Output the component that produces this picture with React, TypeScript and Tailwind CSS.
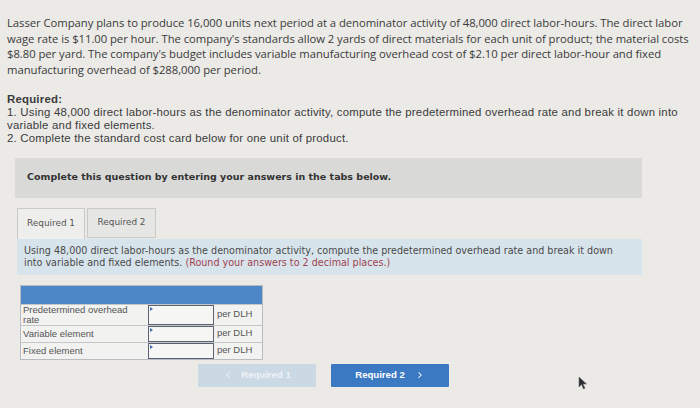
import { ChevronLeft, ChevronRight } from "lucide-react";

const rows = [
  { label: "Predetermined overhead rate", tall: true },
  { label: "Variable element", tall: false },
  { label: "Fixed element", tall: false },
];

function Cursor() {
  return (
    <svg width="10" height="14" viewBox="0 0 10 14" className="absolute left-[578px] top-[376px]">
      <path d="M1 1 L1 11 L3.5 8.5 L5.5 13 L7 12.3 L5 8 L8.5 8 Z" fill="#2b2b30" stroke="#6b6b70" strokeWidth="0.6" />
    </svg>
  );
}

export default function App() {
  return (
    <div className="relative w-[700px] h-[408px] overflow-hidden bg-[#ebeae7] text-[#3a3a3a]">
      <div className="pt-[15px] pl-[7px] font-['Open_Sans',sans-serif] text-[11.3px] leading-[15.6px] whitespace-nowrap tracking-[-0.05px]">
        Lasser Company plans to produce 16,000 units next period at a denominator activity of 48,000 direct labor-hours. The direct labor
        <br />
        wage rate is $11.00 per hour. The company's standards allow 2 yards of direct materials for each unit of product; the material costs
        <br />
        $8.80 per yard. The company's budget includes variable manufacturing overhead cost of $2.10 per direct labor-hour and fixed
        <br />
        manufacturing overhead of $288,000 per period.
      </div>

      <div className="mt-[16px] pl-[7px] font-['Liberation_Sans',Arial,sans-serif] text-[11.4px] leading-[12.8px] whitespace-nowrap tracking-[0.22px]">
        <div className="font-bold">Required:</div>
        <div>1. Using 48,000 direct labor-hours as the denominator activity, compute the predetermined overhead rate and break it down into</div>
        <div>variable and fixed elements.</div>
        <div>2. Complete the standard cost card below for one unit of product.</div>
      </div>

      <div className="mt-[13px] ml-[15px] w-[627px] h-[40px] bg-[#d9d9d7] flex items-center pl-[12px]">
        <span className="font-['DejaVu_Sans',Verdana,sans-serif] font-bold text-[9.5px] text-[#333]">
          Complete this question by entering your answers in the tabs below.
        </span>
      </div>

      <div className="mt-[10px] ml-[17px] flex gap-[2px] font-['DejaVu_Sans',Verdana,sans-serif] text-[8.9px] text-[#555]">
        <div className="w-[68px] h-[31px] border border-b-0 border-[#c9c9c6] bg-[#eeeeec] flex items-center justify-center">
          Required 1
        </div>
        <div className="w-[69px] h-[30px] border border-[#c9c9c6] bg-[#e6e6e4] flex items-center justify-center">
          Required 2
        </div>
      </div>

      <div className="ml-[17px] w-[625px] h-[36px] bg-[#d8e4ec] flex flex-col justify-center pl-[7px] font-['DejaVu_Sans',Verdana,sans-serif] text-[9.6px] leading-[11.2px] text-[#4a4a4a] whitespace-nowrap">
        <div>Using 48,000 direct labor-hours as the denominator activity, compute the predetermined overhead rate and break it down</div>
        <div>
          into variable and fixed elements. <span className="text-[#a0434f]">(Round your answers to 2 decimal places.)</span>
        </div>
      </div>

      <div className="mt-[10px] ml-[20px] w-[243px] border border-[#b9bcc0] font-['Liberation_Sans',Arial,sans-serif] text-[9.5px] text-[#555]">
        <div className="h-[18px] bg-[#4d87c7]" />
        {rows.map((r) => (
          <div key={r.label} className={`flex border-t border-[#c4c6c8] bg-[#f2f2f0] ${r.tall ? "h-[21px]" : "h-[17px]"}`}>
            <div className={`w-[127px] px-[2px] leading-[10px] flex ${r.tall ? "items-start whitespace-normal" : "items-center"}`}>
              {r.label}
            </div>
            <div className="relative w-[66px] border-[1.5px] border-[#5a6172] bg-[#f6f6f5]">
              <span className="absolute left-[1px] top-[1px] w-0 h-0 border-t-[2px] border-b-[2px] border-l-[3px] border-t-transparent border-b-transparent border-l-[#3b6fb0]" />
            </div>
            <div className="flex-1 flex items-center pl-[3px]">per DLH</div>
          </div>
        ))}
      </div>

      <div className="mt-[4px] ml-[198px] flex gap-[15px] font-['Liberation_Sans',Arial,sans-serif] font-bold text-[9.6px]">
        <div className="w-[118px] h-[23px] rounded-[1px] bg-[#cbd9e5] text-[#eef2f6] flex items-center justify-center gap-[8px]">
          <ChevronLeft size={10} strokeWidth={2.5} />
          <span>Required 1</span>
        </div>
        <div className="w-[118px] h-[23px] rounded-[1px] bg-[#3b79c3] text-white flex items-center justify-center gap-[10px]">
          <span>Required 2</span>
          <ChevronRight size={10} strokeWidth={2.5} />
        </div>
      </div>

      <Cursor />
    </div>
  );
}
